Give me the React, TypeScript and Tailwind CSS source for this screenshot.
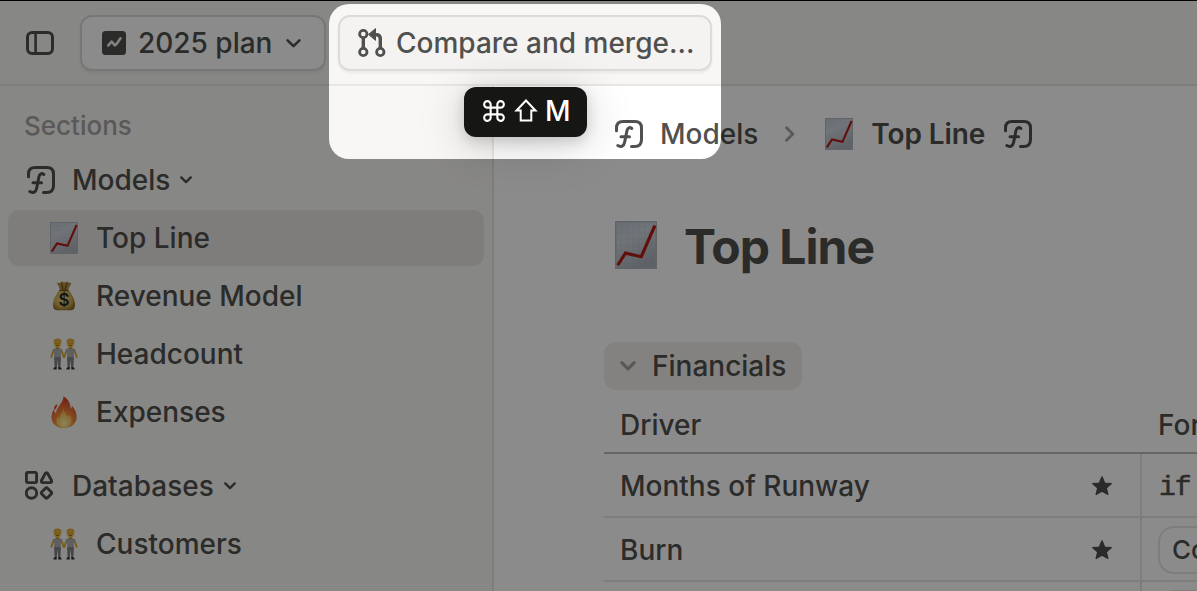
import type { ReactNode } from "react";

function PanelIcon() {
  return (
    <svg width="28" height="24" viewBox="0 0 28 24" fill="none" stroke="currentColor" className="shrink-0">
      <rect x="1.5" y="1.5" width="25" height="21" rx="4.5" strokeWidth="3" />
      <path d="M9.6 2v20" strokeWidth="2.6" />
    </svg>
  );
}

function PlanIcon() {
  return (
    <svg width="24" height="24" viewBox="0 0 24 24" fill="none" className="shrink-0">
      <rect width="24" height="24" rx="3.5" fill="currentColor" />
      <path d="M6.300 14.400 9.600 10.600 13 14.400 15.400 11.800 18.500 7.300" stroke="#f0efee" strokeWidth="2.600" strokeLinejoin="round" strokeLinecap="round" />
    </svg>
  );
}

function MergeIcon() {
  return (
    <svg width="28" height="30" viewBox="0 0 28 30" fill="none" stroke="currentColor" strokeWidth="2.8" className="shrink-0">
      <circle cx="5.3" cy="6" r="3.7" />
      <circle cx="5.3" cy="24" r="3.7" />
      <circle cx="22.3" cy="24" r="3.7" />
      <path d="M5.3 10v10" strokeWidth="3.4" />
      <path d="M22.3 20v-9.200q0-4-4-4H17" strokeWidth="3.4" />
      <path d="M10.600 6.400 17.500.6v11.800z" fill="currentColor" strokeWidth="1" strokeLinejoin="round" />
    </svg>
  );
}

function FunctionIcon() {
  return (
    <svg width="30" height="30" viewBox="0 0 30 30" fill="none" stroke="currentColor" strokeWidth="3" strokeLinecap="round" className="shrink-0">
      <path d="M2.500 11.800V9Q2.500 2.500 9 2.500H21Q27.500 2.500 27.500 9V20.500Q27.500 27.500 20.500 27.500H17.500" />
      <path d="M17.800 9.500C16.600 7.900 13.700 8.300 13 11.500L10.600 23.400C9.900 26.900 7 28.600 3.800 26.600" />
      <path d="M7 17.700H15.500" />
    </svg>
  );
}

function ShapesIcon() {
  return (
    <svg width="28" height="29" viewBox="0 0 28 29" fill="none" stroke="currentColor" strokeWidth="2.900" strokeLinejoin="round" className="mb-px -ml-px shrink-0">
      <rect x="1.400" y="1.400" width="10.200" height="10.200" rx="1.600" />
      <path d="M20.200 2.600Q21.500.6 22.800 2.600L26.400 9.200Q27.200 11.600 25 11.600H18Q15.800 11.600 16.600 9.200Z" />
      <circle cx="6.500" cy="22" r="5.200" />
      <path d="M20.500 17.300Q21.500 16.300 22.500 17.300L26.200 21Q27.200 22 26.200 23L22.500 26.700Q21.500 27.700 20.500 26.700L16.800 23Q15.800 22 16.800 21Z" />
    </svg>
  );
}

function Chevron({ size, width, right }: { size: number; width: number; right?: boolean }) {
  return (
    <svg width={size} height={size} viewBox="0 0 14 14" fill="none" stroke="currentColor" strokeWidth={width} strokeLinecap="round" strokeLinejoin="round" className={right ? "shrink-0 -rotate-90" : "shrink-0"}>
      <path d="M1.500 4 7 9.500 12.500 4" />
    </svg>
  );
}

function ChartEmoji({ width, height }: { width: number; height: number }) {
  return (
    <svg width={width} height={height} viewBox="0 0 28 32" preserveAspectRatio="none" fill="none" className="shrink-0">
      <defs>
        <linearGradient id="paper" x1="0" y1="0" x2=".4" y2="1">
          <stop offset="0" stopColor="#c0cad5" />
          <stop offset=".4" stopColor="#d0d7df" />
          <stop offset="1" stopColor="#afb6be" />
        </linearGradient>
      </defs>
      <rect x=".5" y=".5" width="27" height="31" fill="url(#paper)" stroke="#b0b8c0" />
      <path d="M4 1v30M8 1v30M12 1v30M16 1v30M20 1v30M24 1v30M1 4h26M1 8h26M1 12h26M1 16h26M1 20h26M1 24h26M1 28h26" stroke="#9eabb8" strokeWidth=".3" opacity=".3" />
      <path d="M1.800 29.500 7 21.400 17.500 23.800 26.600 3" stroke="#b41a14" strokeWidth="2.100" />
    </svg>
  );
}

function MoneyEmoji() {
  return (
    <svg width="28" height="32" viewBox="0 0 28 32" className="shrink-0">
      <defs>
        <radialGradient id="bag" cx=".45" cy=".45" r=".6">
          <stop offset="0" stopColor="#ebd080" />
          <stop offset=".65" stopColor="#cdab50" />
          <stop offset="1" stopColor="#8d6b2b" />
        </radialGradient>
      </defs>
      <path d="M6.500 2.300q2 1.300 3.700.1 1.800-1.600 4 0 2.800-1.500 4.800.1 1.700.8 2.600.3Q19.500 7 18 10h-8Q9 6 6.500 2.300Z" fill="#b09048" />
      <path d="M10 9.500h8c3 3.500 7 9 7 15.500 0 4-2 5.300-5 5.300H8c-3 0-5-1.300-5-5.300 0-6.500 4-12 7-15.500Z" fill="url(#bag)" />
      <path d="M9.500 10.300h9M11.500 3.500l1.500 6M17 3.500l-2 6" stroke="#705019" strokeWidth="1.200" fill="none" />
      <text x="14" y="26.300" textAnchor="middle" fill="#252522" className="font-['Inter'] text-[17px] font-semibold">$</text>
    </svg>
  );
}

function Person({ x }: { x: number }) {
  return (
    <g transform={`translate(${x} 0)`}>
      <path d="M-3.700 11.700-6.200 19M3.700 11.700 6.200 19" stroke="#d7a026" strokeWidth="1.700" strokeLinecap="round" />
      <path d="M-3.500 18h7l-.6 11.500H.7L0 21l-.7 8.500h-2.200Z" fill="#808187" />
      <path d="M-2.200 10h4.400q2.300.5 2.800 3.500l-1.700.8.200 5h-7l.2-5L-5 13.500q.5-3 2.800-3.500Z" fill="#adaeb3" />
      <path d="M-4 31.600v-1.400l1.500-1.200h1.700v2.600ZM4 31.600v-1.400L2.500 29H.8v2.600Z" fill="#303033" />
      <rect x="-1.200" y="8" width="2.400" height="3" fill="#c38b20" />
      <ellipse cx="0" cy="5.300" rx="3.600" ry="4.300" fill="#edba3c" />
      <path d="M-3.900 5Q-4.800.6 0 .4 4.800.6 3.900 5 3 2.700 0 2.900-3 2.700-3.900 5Z" fill="#dcaa40" />
      <path d="M-2 5.200h1M1 5.200h1M-1.200 7.400h2.400" stroke="#6b4517" strokeWidth=".9" />
    </g>
  );
}

function PeopleEmoji() {
  return (
    <svg width="28" height="32" viewBox="0 0 28 32" fill="none" className="mb-px shrink-0">
      <Person x={7.500} />
      <Person x={20.500} />
    </svg>
  );
}

function FireEmoji() {
  return (
    <svg width="28" height="32" viewBox="0 0 28 32" className="mb-px shrink-0">
      <defs>
        <radialGradient id="flame" cx=".5" cy=".9" r=".75">
          <stop offset="0" stopColor="#ffd862" />
          <stop offset=".5" stopColor="#f08a3c" />
          <stop offset="1" stopColor="#db4c2b" />
        </radialGradient>
        <radialGradient id="core" cx=".5" cy=".8" r=".7">
          <stop offset="0" stopColor="#fff3a4" />
          <stop offset="1" stopColor="#f4a842" />
        </radialGradient>
      </defs>
      <path d="M13.400.2C17 2 20.500 6 20.700 13c.9-.8 1.300-1.900 1.200-3.200C25.500 13.500 27 17.800 26.600 22c-.6 6-5.500 10-12.500 10S2 28 1.600 21.900c-.2-3 .7-6 2.400-8.300.4 1.800 1 3 2 4C6.300 10.200 13.800 7 13.400.2Z" fill="url(#flame)" />
      <path d="M7.300 8.200c.2 3-2 3.800-2.500 6.200C3 12 4.500 9.200 7.300 8.200Z" fill="#d94d2a" />
      <path d="M13.800 12c-.4 4.300 3.200 5.200 3.500 9 1-.6 1.500-1.500 1.700-2.600 5 6 2.300 12.700-5 12.700S4.300 25.500 8.200 20c.3 1.400.9 2.200 1.800 2.700C9.500 18 12.800 16 13.800 12Z" fill="url(#core)" />
    </svg>
  );
}

function StarIcon() {
  return (
    <svg width="22" height="22" viewBox="0 0 22 22" fill="currentColor" stroke="currentColor" strokeWidth="1.200" strokeLinejoin="round" className="shrink-0">
      <path d="m11 1.800 2.700 6.200 6.700.6-5.100 4.400 1.600 6.500L11 16.200l-5.900 3.300L6.700 13 1.600 8.600l6.700-.6Z" />
    </svg>
  );
}

function SidebarItem({ icon, label, active }: { icon: ReactNode; label: string; active?: boolean }) {
  return (
    <div className={`mx-2 mb-0.5 flex h-14 items-center gap-[18px] rounded-[11px] pl-[42px] ${active ? "bg-[#eae6e2]" : ""}`}>
      {icon}
      <span>{label}</span>
    </div>
  );
}

function SidebarGroup({ icon, label }: { icon: ReactNode; label: string }) {
  return (
    <div className="mb-0.5 flex h-14 items-center pl-[26px]">
      <span className="flex w-[46px] shrink-0">{icon}</span>
      <span>{label}</span>
      <span className="ml-2.5">
        <Chevron size={12} width={2.700} />
      </span>
    </div>
  );
}

function DriverRow({ label, children }: { label: string; children: ReactNode }) {
  return (
    <div className="flex h-16 shrink-0 border-b-2 border-[#e7e5e3]">
      <div className="flex w-[538px] shrink-0 items-center justify-between border-r-2 border-[#e7e5e3] pt-0.5 pr-[27px] pl-4">
        <span>{label}</span>
        <StarIcon />
      </div>
      <div className="flex items-center pt-0.5 pl-4">{children}</div>
    </div>
  );
}

export default function App() {
  return (
    <div className="relative flex h-[591px] w-[1197px] flex-col overflow-hidden border-t border-black bg-white font-['Inter',sans-serif] text-[28px] leading-none font-medium whitespace-nowrap text-[#50504e]">
      <header className="flex h-[85px] shrink-0 items-start border-b-2 border-[#e8e7e5] bg-[#f8f7f5] pt-3.5">
        <div className="flex h-14 w-20 items-center pl-[26px]">
          <PanelIcon />
        </div>
        <button className="flex h-14 w-[246px] items-center rounded-xl border-2 border-[#dcdbd9] bg-white pl-5 shadow-[0_2px_3px_rgba(0,0,0,0.06)]">
          <PlanIcon />
          <span className="ml-3">2025 plan</span>
          <span className="ml-3.5">
            <Chevron size={15} width={2.400} />
          </span>
        </button>
        <button className="ml-3 flex h-14 w-[374px] items-center rounded-xl border-2 border-[#dcdbd9] bg-[#f4f3f1] pl-[18px] shadow-[0_2px_3px_rgba(0,0,0,0.06)]">
          <MergeIcon />
          <span className="ml-2.5">Compare and merge...</span>
        </button>
      </header>

      <div className="flex min-h-0 flex-1">
        <aside className="flex w-[494px] shrink-0 flex-col border-r-2 border-[#e8e7e5] bg-[#f8f7f5] pt-[26px]">
          <div className="mb-3 flex h-7 items-center pl-6 text-[26px] text-[#a5a4a2]">Sections</div>
          <SidebarGroup icon={<FunctionIcon />} label="Models" />
          <SidebarItem icon={<ChartEmoji width={28} height={32} />} label="Top Line" active />
          <SidebarItem icon={<MoneyEmoji />} label="Revenue Model" />
          <SidebarItem icon={<PeopleEmoji />} label="Headcount" />
          <SidebarItem icon={<FireEmoji />} label="Expenses" />
          <div className="h-4 shrink-0" />
          <SidebarGroup icon={<ShapesIcon />} label="Databases" />
          <SidebarItem icon={<PeopleEmoji />} label="Customers" />
        </aside>

        <main className="flex min-w-0 flex-1 flex-col overflow-hidden pl-[110px]">
          <nav className="mt-6 flex h-12 shrink-0 items-center pl-2.5">
            <FunctionIcon />
            <span className="ml-4">Models</span>
            <span className="ml-6 text-[#a5a5a5]">
              <Chevron size={16} width={2.600} right />
            </span>
            <span className="ml-[27px]">
              <ChartEmoji width={28} height={32} />
            </span>
            <span className="mr-[18px] ml-[18px] font-semibold tracking-[-0.1px]">Top Line</span>
            <FunctionIcon />
          </nav>
          <h1 className="mt-[57px] flex h-[60px] shrink-0 items-center gap-[27px] pl-[11px] text-[48px] font-bold tracking-[-1px]">
            <span className="pb-px">
              <ChartEmoji width={42} height={48} />
            </span>
            <span className="pt-1">Top Line</span>
          </h1>
          <div className="mt-[67px] flex h-12 w-[198px] shrink-0 items-center rounded-xl bg-[#f1eeeb] pl-4">
            <span className="text-[#a3a19f]">
              <Chevron size={16} width={2.700} />
            </span>
            <span className="ml-4">Financials</span>
          </div>
          <div className="flex h-16 shrink-0 items-center border-b-2 border-[#bdbcbb] pt-2">
            <span className="w-[554px] shrink-0 pl-4">Driver</span>
            <span>Formula</span>
          </div>
          <DriverRow label="Months of Runway">
            <span className="pt-1 pl-px font-['Liberation_Mono',monospace] text-[28px] tracking-[-1px] [-webkit-text-stroke:0.5px_currentColor]">if</span>
          </DriverRow>
          <DriverRow label="Burn">
            <span className="flex h-12 w-60 shrink-0 items-center rounded-2xl border-2 border-[#e7e5e3] pl-3 text-[26px]">Co</span>
          </DriverRow>
          <div className="flex h-16 shrink-0">
            <div className="w-[538px] shrink-0 border-r-2 border-[#e7e5e3]" />
            <div className="pt-2 pl-4">
              <div className="h-12 w-60 rounded-2xl border-2 border-[#e7e5e3]" />
            </div>
          </div>
        </main>
      </div>

      <div className="absolute top-[86px] left-[464px] flex h-[50px] w-[123px] items-center rounded-xl bg-[#161614] pl-[18.500px] text-white shadow-[0_8px_48px_rgba(0,0,0,0.18),0_4px_14px_rgba(0,0,0,0.16)]">
        <svg width="22" height="22" viewBox="0 0 23 23" fill="none" stroke="currentColor" strokeWidth="2.200" className="mb-0.5">
          <path d="M8 8V4.700A3.400 3.400 0 1 0 4.700 8H18.300A3.400 3.400 0 1 0 15 4.700V18.300A3.400 3.400 0 1 0 18.300 15H4.700A3.400 3.400 0 1 0 8 18.300Z" />
        </svg>
        <svg width="24" height="24" viewBox="0 0 24 24" fill="none" stroke="currentColor" strokeWidth="2" className="mb-1 ml-[9.500px]">
          <path d="M12 2.500 21.500 12.500H17.300V22.500H6.700V12.500H2.500Z" />
        </svg>
        <span className="mb-0.5 ml-[7px]">M</span>
      </div>

      <div className="pointer-events-none absolute top-[3px] left-[328.5px] h-[154.5px] w-[392.5px] rounded-[20px] shadow-[0_0_0_1400px_rgba(0,0,0,0.455)]" />
    </div>
  );
}
